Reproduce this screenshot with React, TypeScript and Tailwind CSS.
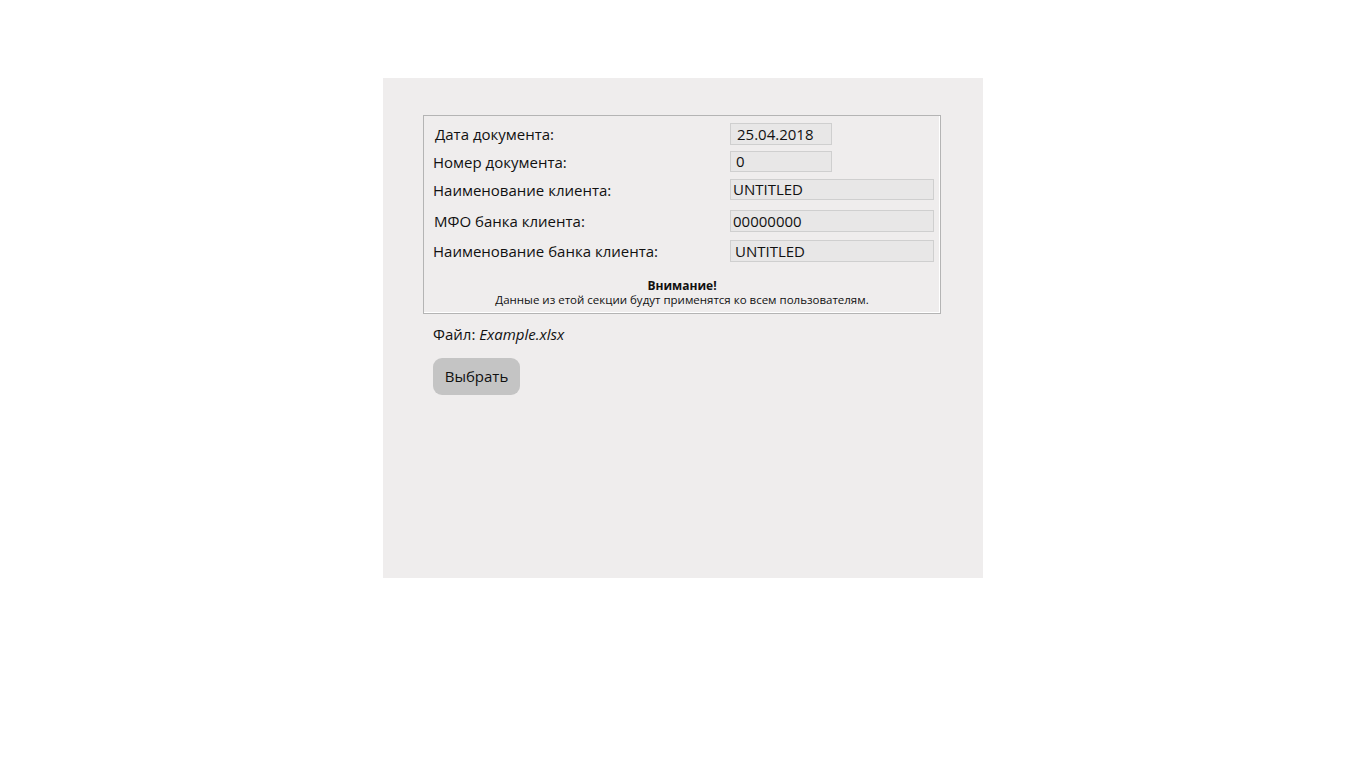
import React from 'react';

const rows = [
  { label: 'Дата документа:', value: '25.04.2018', wide: false, mt: 'mt-[7px]', h: 'h-[22px]', pl: 'pl-[11px]', vpl: 'pl-[6px]' },
  { label: 'Номер документа:', value: '0', wide: false, mt: 'mt-[6px]', h: 'h-[21px]', pl: 'pl-[9px]', vpl: 'pl-[5px]' },
  { label: 'Наименование клиента:', value: 'UNTITLED', wide: true, mt: 'mt-[7px]', h: 'h-[21px]', pl: 'pl-[9px]', vpl: 'pl-[2px]' },
  { label: 'МФО банка клиента:', value: '00000000', wide: true, mt: 'mt-[10px]', h: 'h-[22px]', pl: 'pl-[10px]', vpl: 'pl-[2px]' },
  { label: 'Наименование банка клиента:', value: 'UNTITLED', wide: true, mt: 'mt-[8px]', h: 'h-[22px]', pl: 'pl-[9px]', vpl: 'pl-[4px]' },
];

const App: React.FC = () => {
  return (
    <div className="w-[1366px] h-[768px] bg-white pt-[78px] pl-[383px] font-['Open_Sans',sans-serif] text-[#111]">
      <div className="w-[600px] h-[500px] bg-[#efeded] pt-[37px] pl-[40px]">
        {/* Settings box */}
        <div className="w-[518px] h-[199px] border border-[#b4b4b4] shadow-[inset_-1px_-1px_0_#ffffff] flex flex-col">
          {rows.map((r) => (
            <div key={r.label} className={`flex items-center ${r.mt}`}>
              <div className={`w-[306px] text-[15px] leading-5 ${r.pl}`}>{r.label}</div>
              <div
                className={`${r.wide ? 'w-[204px]' : 'w-[102px]'} ${r.h} bg-[#e8e7e7] border border-[#cfcfcf] flex items-center text-[15px] ${r.vpl}`}
              >
                {r.value}
              </div>
            </div>
          ))}
          <div className="mt-[16px] text-center text-[11.5px] leading-[15px]">
            <div className="font-bold text-[12px]">Внимание!</div>
            <div className="-mt-px">Данные из етой секции будут применятся ко всем пользователям.</div>
          </div>
        </div>

        <div className="mt-[10px] pl-[10px] text-[15px] leading-5">
          Файл: <span className="italic">Example.xlsx</span>
        </div>

        <button className="mt-[14px] ml-[10px] w-[87px] h-[37px] rounded-[9px] bg-[#c4c4c4] text-[15px] text-[#111]">
          Выбрать
        </button>
      </div>
    </div>
  );
};

export default App;
